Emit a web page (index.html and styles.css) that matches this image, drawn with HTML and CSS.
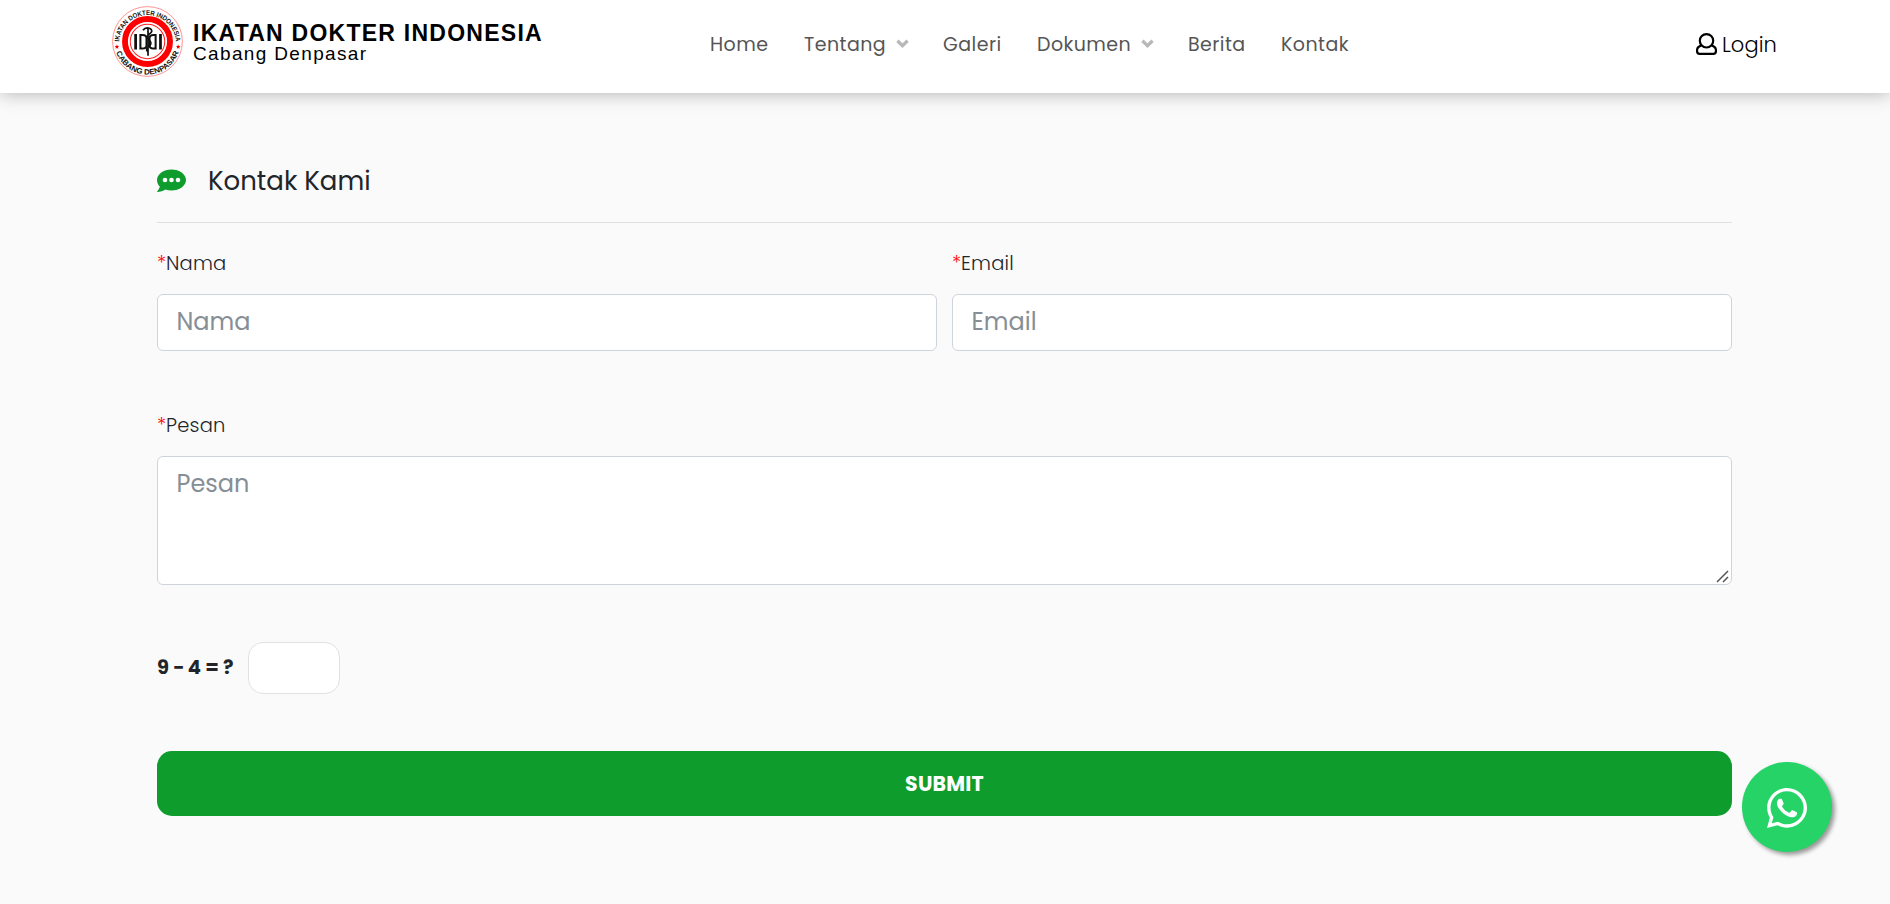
FILE: index.html
```html
<!DOCTYPE html>
<html lang="id">
<head>
<meta charset="utf-8">
<title>Kontak Kami - IDI Cabang Denpasar</title>
<link rel="stylesheet" href="styles.css">
</head>
<body>
<header class="header">
  <a class="brand">
    <svg class="seal" viewBox="0 0 70 70">
      <defs>
        <path id="top" d="M7 37a28 28 0 0 1 56 0"/>
        <path id="bottom" d="M2.400 35a32.600 32.600 0 0 0 65.200 0"/>
      </defs>
      <circle cx="35" cy="35" r="34.400" fill="#fff" stroke="#f66" stroke-width=".7"/>
      <circle cx="35" cy="35" r="22.200" fill="none" stroke="red" stroke-width="5.800"/>
      <circle cx="35" cy="35" r="17" fill="none" stroke="#f22" stroke-width="1"/>
      <text class="seal-text"><textPath href="#top" startOffset="50%" text-anchor="middle" textLength="84" lengthAdjust="spacingAndGlyphs">IKATAN DOKTER INDONESIA</textPath></text>
      <text class="seal-text seal-low"><textPath href="#bottom" startOffset="50%" text-anchor="middle" textLength="81" lengthAdjust="spacingAndGlyphs">CABANG DENPASAR</textPath></text>
      <path fill="red" d="m4.800 38 .7 1.500 1.600.1-1.200 1 .4 1.600-1.500-.8-1.400.8.4-1.600-1.200-1 1.600-.1zM65.200 38l.7 1.500 1.600.1-1.200 1 .4 1.600-1.500-.8-1.400.8.4-1.600-1.200-1 1.600-.1z"/>
      <g fill="none" stroke="#111">
        <path stroke-width="2.700" d="M23.300 27.500v15.500M47.800 27.500v15.500"/>
        <path stroke-width="2" d="M28 27.500v15.500M28 28.500h2q4 0 4 3v7.500q0 3-4 3h-2zM43 27.500v15.500M43 28.500h-2q-4 0-4 3v7.500q0 3 4 3h2z"/>
        <path stroke-width="1.700" d="M35.500 21v28M30.500 24q2.500-3.500 6.500-2 4.500 2.500 0 5.500-4 3-.5 6 4 4-1 7-3 3 .5 5"/>
      </g>
    </svg>
    <span class="brand-text"><b class="brand-name">IKATAN DOKTER INDONESIA</b><span class="brand-branch">Cabang Denpasar</span></span>
  </a>
  <nav class="nav">
    <a>Home</a>
    <a>Tentang<svg class="chev" viewBox="0 0 12 8"><path d="m1.300 1.500 4.700 4.500 4.700-4.500"/></svg></a>
    <a>Galeri</a>
    <a>Dokumen<svg class="chev" viewBox="0 0 12 8"><path d="m1.300 1.500 4.700 4.500 4.700-4.500"/></svg></a>
    <a>Berita</a>
    <a>Kontak</a>
  </nav>
  <a class="login"><svg class="user" viewBox="0 0 21 22"><circle cx="10.500" cy="7.800" r="6.700"/><path d="M5.300 12.600C2.400 13.200 1 15.300 1 17.800c0 2 .9 3.100 2.500 3.100h14c1.600 0 2.500-1.100 2.500-3.100 0-2.500-1.400-4.600-4.300-5.200"/></svg><span>Login</span></a>
</header>
<main class="main">
  <h1 class="title"><svg class="bubble" viewBox="0 0 29 24"><path fill="#0e9c2d" d="M14.500.5C22.500.5 29 5.200 29 11s-6.500 10.500-14.500 10.500c-2.200 0-4.300-.4-6.100-1C6.300 22 3.300 23 .3 23c-.3-.2-.2-.6 0-.8 1.200-1.300 2.200-3 2.500-4.600C1 15.800 0 13.500 0 11 0 5.200 6.500.5 14.500.5z"/><g fill="#fff"><circle cx="8" cy="11" r="2.300"/><circle cx="14.500" cy="11" r="2.300"/><circle cx="21" cy="11" r="2.300"/></g></svg><span>Kontak Kami</span></h1>
  <form class="form">
    <div class="row">
      <div class="field"><label class="label"><i>*</i>Nama</label><input class="input" placeholder="Nama"></div>
      <div class="field"><label class="label"><i>*</i>Email</label><input class="input" placeholder="Email"></div>
    </div>
    <div class="field message"><label class="label"><i>*</i>Pesan</label><textarea class="input area" placeholder="Pesan"></textarea><svg class="grip" viewBox="0 0 13 13"><path d="M1 12 12 1M7 12l5-5"/></svg></div>
    <div class="captcha"><b>9 − 4 = ?</b><input class="answer"></div>
    <button class="submit" type="button">SUBMIT</button>
  </form>
</main>
<a class="whatsapp"><svg class="wa" viewBox="0 0 448 512"><path fill="#fff" d="M380.900 97.100C339 55.100 283.200 32 223.900 32c-122.400 0-222 99.600-222 222 0 39.100 10.200 77.300 29.600 111L0 480l117.700-30.900c32.400 17.700 68.900 27 106.100 27h.1c122.300 0 224.100-99.600 224.100-222 0-59.300-25.200-115-67.100-157zm-157 341.600c-33.200 0-65.700-8.900-94-25.700l-6.700-4-69.800 18.300L72 359.200l-4.400-7c-18.500-29.400-28.200-63.300-28.200-98.200 0-101.700 82.800-184.500 184.600-184.500 49.300 0 95.600 19.200 130.400 54.100 34.800 34.900 56.200 81.200 56.100 130.500 0 101.800-84.900 184.600-186.600 184.600zm101.200-138.200c-5.500-2.800-32.800-16.200-37.900-18-5.100-1.900-8.800-2.800-12.500 2.800-3.700 5.600-14.300 18-17.600 21.800-3.200 3.700-6.500 4.200-12 1.400-32.600-16.300-54-29.100-75.500-66-5.700-9.800 5.700-9.100 16.300-30.300 1.800-3.700.9-6.900-.5-9.700-1.400-2.800-12.500-30.100-17.100-41.200-4.500-10.800-9.100-9.300-12.500-9.500-3.200-.2-6.900-.2-10.600-.2-3.700 0-9.700 1.400-14.800 6.900-5.100 5.600-19.400 19-19.400 46.300 0 27.300 19.900 53.700 22.600 57.400 2.800 3.700 39.100 59.700 94.800 83.800 35.200 15.200 49 16.500 66.600 13.900 10.700-1.600 32.800-13.400 37.400-26.400 4.600-13 4.600-24.100 3.200-26.400-1.300-2.500-5-3.900-10.500-6.600z"/></svg></a>
</body>
</html>
```
FILE: styles.css
```css
* { box-sizing: border-box; }
body { margin: 0; min-height: 904px; background: #fafafa; color: #212529; font-family: Poppins, Inter, sans-serif; overflow: hidden; }
.header { height: 93px; padding: 0 113px 0 112px; display: flex; align-items: flex-start; background: #fff; box-shadow: 0 0 18px rgba(0,0,0,.3); }
.brand { display: flex; width: 598px; padding-top: 6px; color: #000; font-family: "Liberation Sans", sans-serif; }
.seal { width: 71px; height: 71px; flex: none; }
.seal-text { font: bold 6.700px "Liberation Sans", sans-serif; fill: #111; }
.seal-low { font-size: 7.500px; }
.brand-text { display: flex; flex-direction: column; padding: 15px 0 0 10px; white-space: nowrap; }
.brand-name { font-size: 23px; line-height: 24px; letter-spacing: 1.250px; }
.brand-branch { font-size: 19px; line-height: 20px; margin-top: -1px; letter-spacing: 1.350px; }
.nav { display: grid; grid-template-columns: 94px 139px 94px 151px 93px 100px; height: 88px; align-items: center; font-size: 19px; letter-spacing: .45px; color: #555; white-space: nowrap; }
.chev { width: 13px; height: 9px; margin: 0 0 3px 10px; fill: none; stroke: #b8b8b8; stroke-width: 3; }
.login { display: flex; align-items: center; gap: 5px; height: 88px; margin-left: auto; font-size: 21px; font-weight: 300; letter-spacing: .1px; color: #000; }
.user { width: 21px; height: 22px; fill: none; stroke: #000; stroke-width: 2.200; }
.main { width: 1575px; margin: 0 0 0 157px; }
.title { margin: 0; height: 130px; padding-top: 46px; border-bottom: 1px solid #dee0e1; display: flex; align-items: center; gap: 22px; font-size: 26px; font-weight: 400; }
.title span { padding-top: 1px; }
.bubble { width: 29px; height: 24px; }
.form { display: flex; flex-direction: column; }
.row { display: grid; grid-template-columns: 1fr 1fr; gap: 15px; }
.field { display: flex; flex-direction: column; }
.label { height: 71px; padding: 27px 0 0; font-size: 19.500px; line-height: 27px; font-weight: 300; letter-spacing: .2px; }
.label i { display: inline-block; width: 9px; font-style: normal; color: red; }
.input { width: 100%; height: 57px; margin: 0; padding: 0 18.500px 2px; border: 1px solid #ced4da; border-radius: 6px; background: #fff; font: 400 24px Poppins, Inter, sans-serif; }
.input::placeholder { color: #868e96; opacity: 1; }
.message { position: relative; margin-top: 34px; }
.area { height: 129px; padding-top: 9px; resize: none; display: block; }
.grip { position: absolute; right: 3px; bottom: 2px; width: 13px; height: 13px; fill: none; stroke: #555; stroke-width: 1.500; }
.captcha { display: flex; align-items: center; margin-top: 56px; height: 53px; font-size: 19.500px; }
.captcha b { width: 91px; white-space: nowrap; }
.answer { width: 92px; height: 52px; border: 1px solid #e1e1e1; border-radius: 15px; background: #fff; }
.submit { height: 65px; margin-top: 57px; padding-bottom: 1px; border: 0; border-radius: 15px; background: #0e9c2d; color: #fff; font: 700 20.500px Poppins, Inter, sans-serif; letter-spacing: .2px; }
.whatsapp { position: fixed; left: 1742px; top: 762px; width: 90px; height: 90px; border-radius: 50%; background: #25d366; box-shadow: 3px 3px 4px #999; display: flex; align-items: center; justify-content: center; padding-top: 2px; }
.wa { width: 40px; height: 46px; }
```
